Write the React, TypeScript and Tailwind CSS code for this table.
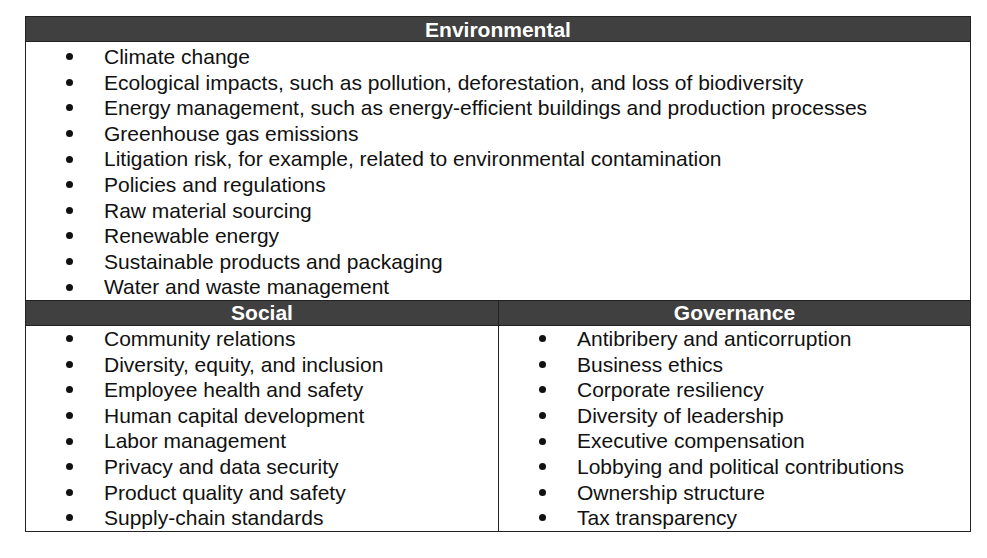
const environmental = [
  "Climate change",
  "Ecological impacts, such as pollution, deforestation, and loss of biodiversity",
  "Energy management, such as energy-efficient buildings and production processes",
  "Greenhouse gas emissions",
  "Litigation risk, for example, related to environmental contamination",
  "Policies and regulations",
  "Raw material sourcing",
  "Renewable energy",
  "Sustainable products and packaging",
  "Water and waste management",
];

const social = [
  "Community relations",
  "Diversity, equity, and inclusion",
  "Employee health and safety",
  "Human capital development",
  "Labor management",
  "Privacy and data security",
  "Product quality and safety",
  "Supply-chain standards",
];

const governance = [
  "Antibribery and anticorruption",
  "Business ethics",
  "Corporate resiliency",
  "Diversity of leadership",
  "Executive compensation",
  "Lobbying and political contributions",
  "Ownership structure",
  "Tax transparency",
];

function Header({ title }: { title: string }) {
  return (
    <div className="flex h-[24px] items-center justify-center bg-[#404040] text-[21px] font-bold leading-none text-white">
      {title}
    </div>
  );
}

function BulletList({ items }: { items: string[] }) {
  return (
    <ul className="text-[21px] leading-[25.6px] text-[#111]">
      {items.map((it) => (
        <li key={it} className="flex items-center whitespace-nowrap">
          <span className="flex w-[78px] shrink-0 pl-[40px]">
            <span className="h-[7px] w-[7px] rounded-full bg-[#111]" />
          </span>
          <span>{it}</span>
        </li>
      ))}
    </ul>
  );
}

export default function App() {
  return (
    <div
      className="min-h-[558px] w-[987px] bg-white pl-[25px] pt-[16px]"
      style={{ fontFamily: '"Liberation Sans", Arial, sans-serif' }}
    >
      <div className="w-[946px] border border-[#222]">
        <Header title="Environmental" />
        <div className="border-t border-[#222] pt-[2px]">
          <BulletList items={environmental} />
        </div>
        <div className="grid grid-cols-[473px_1fr] border-t border-[#222]">
          <div className="border-r border-[#222]">
            <Header title="Social" />
            <div className="border-t border-[#222]">
              <BulletList items={social} />
            </div>
          </div>
          <div>
            <Header title="Governance" />
            <div className="border-t border-[#222]">
              <BulletList items={governance} />
            </div>
          </div>
        </div>
      </div>
    </div>
  );
}
